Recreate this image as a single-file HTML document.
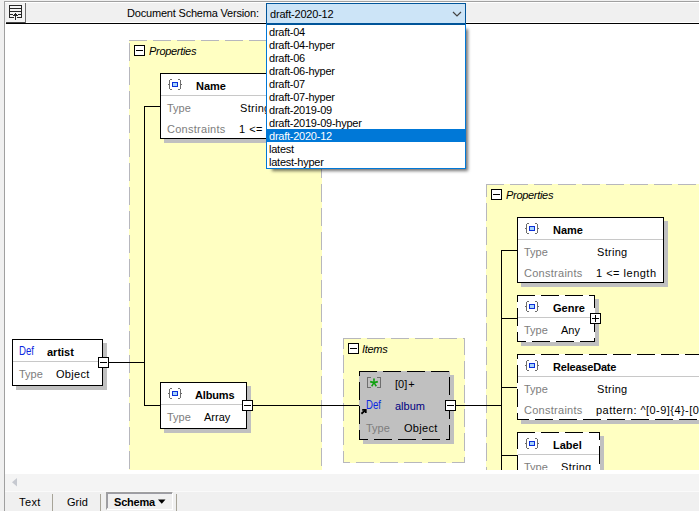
<!DOCTYPE html>
<html><head><meta charset="utf-8">
<style>
*{margin:0;padding:0;box-sizing:border-box}
html,body{width:699px;height:511px;overflow:hidden;background:#f0f0f0;font-family:"Liberation Sans",sans-serif;font-size:11px;color:#000}
.a{position:absolute}
.t{position:absolute;white-space:pre;line-height:12px}
#canvas{position:absolute;left:5px;top:24px;width:694px;height:450px;background:#fff}
#clip{position:absolute;left:0;top:0;width:694px;height:446px;overflow:hidden}
.panel{position:absolute;background:#fffdc8}
.box{position:absolute;background:#fff;border:1px solid #000}
.sh{position:absolute;background:#c0c0c0}
.sep{position:absolute;height:1px;background:#c8c8c8}
.ln{position:absolute;background:#000}
.btn{position:absolute;width:11px;height:11px;border:1px solid #000;background:#fff}
.btn:before{content:"";position:absolute;left:1px;top:4px;width:7px;height:1px;background:#000}
.plus:after{content:"";position:absolute;left:4px;top:1px;width:1px;height:7px;background:#000}
.gray{color:#7d7d7d}
.def{color:#0a28e0;font-size:12px;transform:scaleX(0.8);transform-origin:0 0}
.navy{color:#000080}
.val{}
.b{font-weight:bold}
.i{font-style:italic}
</style></head><body>

<!-- window frame -->
<div class="a" style="left:4px;top:1px;width:695px;height:1px;background:#a0a0a0"></div>
<div class="a" style="left:4px;top:1px;width:1px;height:510px;background:#a0a0a0"></div>
<div class="a" style="left:5px;top:2px;width:694px;height:1px;background:#fff"></div>
<div class="a" style="left:5px;top:22px;width:694px;height:1px;background:#fff"></div>
<div class="a" style="left:6px;top:23px;width:693px;height:1px;background:#000"></div>
<div class="a" style="left:6px;top:22px;width:20px;height:1px;background:#444"></div>

<!-- toolbar icon -->
<div class="a" style="left:7px;top:4px;width:18px;height:18px;background:#f4f4f4"></div>
<div class="a" style="left:25px;top:3px;width:1px;height:20px;background:#6a6a6a"></div>
<svg class="a" style="left:0;top:0" width="30" height="24" shape-rendering="crispEdges">
<g fill="#262626">
<rect x="9" y="5" width="13" height="1"/>
<rect x="9" y="8" width="13" height="1"/>
<rect x="9" y="11" width="13" height="1"/>
<rect x="9" y="14" width="4" height="1"/>
<rect x="18" y="14" width="4" height="1"/>
<rect x="9" y="17" width="5" height="1"/>
<rect x="17" y="17" width="5" height="1"/>
<rect x="9" y="5" width="1" height="13"/>
<rect x="21" y="5" width="1" height="13"/>
<rect x="15" y="13" width="1" height="7"/>
<rect x="14" y="14" width="3" height="1"/>
<rect x="13" y="15" width="5" height="1"/>
</g>
</svg>

<div class="t" style="left:127px;top:7px;font-size:11px;letter-spacing:-0.19px">Document Schema Version:</div>

<!-- canvas -->
<div id="canvas"><div id="clip"><div style="position:absolute;left:-5px;top:-24px;width:699px;height:511px"><svg width="699" height="511" style="position:absolute;left:0;top:0" shape-rendering="crispEdges"><rect x="129" y="40" width="193" height="455" fill="#ffffc2"/><rect x="129" y="40" width="18" height="1" fill="#b7b7bd"/><rect x="153" y="40" width="18" height="1" fill="#b7b7bd"/><rect x="177" y="40" width="18" height="1" fill="#b7b7bd"/><rect x="201" y="40" width="18" height="1" fill="#b7b7bd"/><rect x="225" y="40" width="18" height="1" fill="#b7b7bd"/><rect x="249" y="40" width="18" height="1" fill="#b7b7bd"/><rect x="273" y="40" width="18" height="1" fill="#b7b7bd"/><rect x="297" y="40" width="18" height="1" fill="#b7b7bd"/><rect x="321" y="40" width="1" height="1" fill="#b7b7bd"/><rect x="134" y="494" width="18" height="1" fill="#b7b7bd"/><rect x="158" y="494" width="18" height="1" fill="#b7b7bd"/><rect x="182" y="494" width="18" height="1" fill="#b7b7bd"/><rect x="206" y="494" width="18" height="1" fill="#b7b7bd"/><rect x="230" y="494" width="18" height="1" fill="#b7b7bd"/><rect x="254" y="494" width="18" height="1" fill="#b7b7bd"/><rect x="278" y="494" width="18" height="1" fill="#b7b7bd"/><rect x="302" y="494" width="18" height="1" fill="#b7b7bd"/><rect x="129" y="43" width="1" height="18" fill="#b7b7bd"/><rect x="129" y="67" width="1" height="18" fill="#b7b7bd"/><rect x="129" y="91" width="1" height="18" fill="#b7b7bd"/><rect x="129" y="115" width="1" height="18" fill="#b7b7bd"/><rect x="129" y="139" width="1" height="18" fill="#b7b7bd"/><rect x="129" y="163" width="1" height="18" fill="#b7b7bd"/><rect x="129" y="187" width="1" height="18" fill="#b7b7bd"/><rect x="129" y="211" width="1" height="18" fill="#b7b7bd"/><rect x="129" y="235" width="1" height="18" fill="#b7b7bd"/><rect x="129" y="259" width="1" height="18" fill="#b7b7bd"/><rect x="129" y="283" width="1" height="18" fill="#b7b7bd"/><rect x="129" y="307" width="1" height="18" fill="#b7b7bd"/><rect x="129" y="331" width="1" height="18" fill="#b7b7bd"/><rect x="129" y="355" width="1" height="18" fill="#b7b7bd"/><rect x="129" y="379" width="1" height="18" fill="#b7b7bd"/><rect x="129" y="403" width="1" height="18" fill="#b7b7bd"/><rect x="129" y="427" width="1" height="18" fill="#b7b7bd"/><rect x="129" y="451" width="1" height="18" fill="#b7b7bd"/><rect x="129" y="475" width="1" height="18" fill="#b7b7bd"/><rect x="321" y="41" width="1" height="17" fill="#b7b7bd"/><rect x="321" y="64" width="1" height="18" fill="#b7b7bd"/><rect x="321" y="88" width="1" height="18" fill="#b7b7bd"/><rect x="321" y="112" width="1" height="18" fill="#b7b7bd"/><rect x="321" y="136" width="1" height="18" fill="#b7b7bd"/><rect x="321" y="160" width="1" height="18" fill="#b7b7bd"/><rect x="321" y="184" width="1" height="18" fill="#b7b7bd"/><rect x="321" y="208" width="1" height="18" fill="#b7b7bd"/><rect x="321" y="232" width="1" height="18" fill="#b7b7bd"/><rect x="321" y="256" width="1" height="18" fill="#b7b7bd"/><rect x="321" y="280" width="1" height="18" fill="#b7b7bd"/><rect x="321" y="304" width="1" height="18" fill="#b7b7bd"/><rect x="321" y="328" width="1" height="18" fill="#b7b7bd"/><rect x="321" y="352" width="1" height="18" fill="#b7b7bd"/><rect x="321" y="376" width="1" height="18" fill="#b7b7bd"/><rect x="321" y="400" width="1" height="18" fill="#b7b7bd"/><rect x="321" y="424" width="1" height="18" fill="#b7b7bd"/><rect x="321" y="448" width="1" height="18" fill="#b7b7bd"/><rect x="321" y="472" width="1" height="18" fill="#b7b7bd"/><rect x="134" y="45" width="11" height="11" fill="#000"/><rect x="135" y="46" width="9" height="9" fill="#fff"/><rect x="136" y="50" width="7" height="1" fill="#000"/><rect x="144" y="106" width="1" height="300" fill="#000"/><rect x="144" y="106" width="16" height="1" fill="#000"/><rect x="144" y="405" width="16" height="1" fill="#000"/><rect x="109" y="362" width="36" height="1" fill="#000"/><rect x="16" y="343" width="91" height="47" fill="#c0c0c0"/><rect x="12" y="339" width="91" height="47" fill="#000"/><rect x="13" y="340" width="89" height="45" fill="#fff"/><rect x="13" y="361" width="89" height="1" fill="#c8c8c8"/><rect x="98" y="357" width="11" height="11" fill="#000"/><rect x="99" y="358" width="9" height="9" fill="#fff"/><rect x="100" y="362" width="7" height="1" fill="#000"/><rect x="164" y="77" width="147" height="66" fill="#c0c0c0"/><rect x="160" y="73" width="147" height="66" fill="#000"/><rect x="161" y="74" width="145" height="64" fill="#fff"/><rect x="169" y="80" width="1" height="9" fill="#6c6c6c"/><rect x="170" y="79" width="2" height="1" fill="#6c6c6c"/><rect x="170" y="89" width="2" height="1" fill="#6c6c6c"/><rect x="168" y="84" width="1" height="1" fill="#6c6c6c"/><rect x="180" y="80" width="1" height="9" fill="#6c6c6c"/><rect x="178" y="79" width="2" height="1" fill="#6c6c6c"/><rect x="178" y="89" width="2" height="1" fill="#6c6c6c"/><rect x="181" y="84" width="1" height="1" fill="#6c6c6c"/><rect x="172" y="82" width="6" height="5" fill="#0b2fd8"/><rect x="173" y="83" width="4" height="3" fill="#a8d4fb"/><rect x="161" y="95" width="145" height="1" fill="#c8c8c8"/><rect x="164" y="386" width="87" height="47" fill="#c0c0c0"/><rect x="160" y="382" width="87" height="47" fill="#000"/><rect x="161" y="383" width="85" height="45" fill="#fff"/><rect x="169" y="389" width="1" height="9" fill="#6c6c6c"/><rect x="170" y="388" width="2" height="1" fill="#6c6c6c"/><rect x="170" y="398" width="2" height="1" fill="#6c6c6c"/><rect x="168" y="393" width="1" height="1" fill="#6c6c6c"/><rect x="180" y="389" width="1" height="9" fill="#6c6c6c"/><rect x="178" y="388" width="2" height="1" fill="#6c6c6c"/><rect x="178" y="398" width="2" height="1" fill="#6c6c6c"/><rect x="181" y="393" width="1" height="1" fill="#6c6c6c"/><rect x="172" y="391" width="6" height="5" fill="#0b2fd8"/><rect x="173" y="392" width="4" height="3" fill="#a8d4fb"/><rect x="161" y="404" width="85" height="1" fill="#c8c8c8"/><rect x="242" y="400" width="11" height="11" fill="#000"/><rect x="243" y="401" width="9" height="9" fill="#fff"/><rect x="244" y="405" width="7" height="1" fill="#000"/><rect x="343" y="338" width="122" height="125" fill="#ffffc2"/><rect x="343" y="338" width="18" height="1" fill="#b7b7bd"/><rect x="367" y="338" width="18" height="1" fill="#b7b7bd"/><rect x="391" y="338" width="18" height="1" fill="#b7b7bd"/><rect x="415" y="338" width="18" height="1" fill="#b7b7bd"/><rect x="439" y="338" width="18" height="1" fill="#b7b7bd"/><rect x="463" y="338" width="2" height="1" fill="#b7b7bd"/><rect x="343" y="462" width="7" height="1" fill="#b7b7bd"/><rect x="356" y="462" width="18" height="1" fill="#b7b7bd"/><rect x="380" y="462" width="18" height="1" fill="#b7b7bd"/><rect x="404" y="462" width="18" height="1" fill="#b7b7bd"/><rect x="428" y="462" width="18" height="1" fill="#b7b7bd"/><rect x="452" y="462" width="13" height="1" fill="#b7b7bd"/><rect x="343" y="339" width="1" height="10" fill="#b7b7bd"/><rect x="343" y="355" width="1" height="18" fill="#b7b7bd"/><rect x="343" y="379" width="1" height="18" fill="#b7b7bd"/><rect x="343" y="403" width="1" height="18" fill="#b7b7bd"/><rect x="343" y="427" width="1" height="18" fill="#b7b7bd"/><rect x="343" y="451" width="1" height="11" fill="#b7b7bd"/><rect x="464" y="339" width="1" height="16" fill="#b7b7bd"/><rect x="464" y="361" width="1" height="18" fill="#b7b7bd"/><rect x="464" y="385" width="1" height="18" fill="#b7b7bd"/><rect x="464" y="409" width="1" height="18" fill="#b7b7bd"/><rect x="464" y="433" width="1" height="18" fill="#b7b7bd"/><rect x="464" y="457" width="1" height="5" fill="#b7b7bd"/><rect x="348" y="343" width="11" height="11" fill="#000"/><rect x="349" y="344" width="9" height="9" fill="#fff"/><rect x="350" y="348" width="7" height="1" fill="#000"/><rect x="363" y="375" width="91" height="69" fill="#c0c0c0"/><rect x="359" y="371" width="91" height="69" fill="#c0c0c0"/><rect x="359" y="371" width="18" height="1" fill="#000"/><rect x="383" y="371" width="18" height="1" fill="#000"/><rect x="407" y="371" width="18" height="1" fill="#000"/><rect x="431" y="371" width="18" height="1" fill="#000"/><rect x="359" y="439" width="9" height="1" fill="#000"/><rect x="374" y="439" width="18" height="1" fill="#000"/><rect x="398" y="439" width="18" height="1" fill="#000"/><rect x="422" y="439" width="18" height="1" fill="#000"/><rect x="446" y="439" width="4" height="1" fill="#000"/><rect x="359" y="372" width="1" height="4" fill="#000"/><rect x="359" y="382" width="1" height="18" fill="#000"/><rect x="359" y="406" width="1" height="18" fill="#000"/><rect x="359" y="430" width="1" height="9" fill="#000"/><rect x="449" y="377" width="1" height="18" fill="#000"/><rect x="449" y="401" width="1" height="18" fill="#000"/><rect x="449" y="425" width="1" height="14" fill="#000"/><rect x="445" y="400" width="11" height="11" fill="#000"/><rect x="446" y="401" width="9" height="9" fill="#fff"/><rect x="447" y="405" width="7" height="1" fill="#000"/><rect x="486" y="184" width="315" height="317" fill="#ffffc2"/><rect x="486" y="184" width="18" height="1" fill="#b7b7bd"/><rect x="510" y="184" width="18" height="1" fill="#b7b7bd"/><rect x="534" y="184" width="18" height="1" fill="#b7b7bd"/><rect x="558" y="184" width="18" height="1" fill="#b7b7bd"/><rect x="582" y="184" width="18" height="1" fill="#b7b7bd"/><rect x="606" y="184" width="18" height="1" fill="#b7b7bd"/><rect x="630" y="184" width="18" height="1" fill="#b7b7bd"/><rect x="654" y="184" width="18" height="1" fill="#b7b7bd"/><rect x="678" y="184" width="18" height="1" fill="#b7b7bd"/><rect x="702" y="184" width="18" height="1" fill="#b7b7bd"/><rect x="726" y="184" width="18" height="1" fill="#b7b7bd"/><rect x="750" y="184" width="18" height="1" fill="#b7b7bd"/><rect x="774" y="184" width="18" height="1" fill="#b7b7bd"/><rect x="798" y="184" width="3" height="1" fill="#b7b7bd"/><rect x="486" y="500" width="9" height="1" fill="#b7b7bd"/><rect x="501" y="500" width="18" height="1" fill="#b7b7bd"/><rect x="525" y="500" width="18" height="1" fill="#b7b7bd"/><rect x="549" y="500" width="18" height="1" fill="#b7b7bd"/><rect x="573" y="500" width="18" height="1" fill="#b7b7bd"/><rect x="597" y="500" width="18" height="1" fill="#b7b7bd"/><rect x="621" y="500" width="18" height="1" fill="#b7b7bd"/><rect x="645" y="500" width="18" height="1" fill="#b7b7bd"/><rect x="669" y="500" width="18" height="1" fill="#b7b7bd"/><rect x="693" y="500" width="18" height="1" fill="#b7b7bd"/><rect x="717" y="500" width="18" height="1" fill="#b7b7bd"/><rect x="741" y="500" width="18" height="1" fill="#b7b7bd"/><rect x="765" y="500" width="18" height="1" fill="#b7b7bd"/><rect x="789" y="500" width="12" height="1" fill="#b7b7bd"/><rect x="486" y="185" width="1" height="12" fill="#b7b7bd"/><rect x="486" y="203" width="1" height="18" fill="#b7b7bd"/><rect x="486" y="227" width="1" height="18" fill="#b7b7bd"/><rect x="486" y="251" width="1" height="18" fill="#b7b7bd"/><rect x="486" y="275" width="1" height="18" fill="#b7b7bd"/><rect x="486" y="299" width="1" height="18" fill="#b7b7bd"/><rect x="486" y="323" width="1" height="18" fill="#b7b7bd"/><rect x="486" y="347" width="1" height="18" fill="#b7b7bd"/><rect x="486" y="371" width="1" height="18" fill="#b7b7bd"/><rect x="486" y="395" width="1" height="18" fill="#b7b7bd"/><rect x="486" y="419" width="1" height="18" fill="#b7b7bd"/><rect x="486" y="443" width="1" height="18" fill="#b7b7bd"/><rect x="486" y="467" width="1" height="18" fill="#b7b7bd"/><rect x="486" y="491" width="1" height="9" fill="#b7b7bd"/><rect x="800" y="185" width="1" height="15" fill="#b7b7bd"/><rect x="800" y="206" width="1" height="18" fill="#b7b7bd"/><rect x="800" y="230" width="1" height="18" fill="#b7b7bd"/><rect x="800" y="254" width="1" height="18" fill="#b7b7bd"/><rect x="800" y="278" width="1" height="18" fill="#b7b7bd"/><rect x="800" y="302" width="1" height="18" fill="#b7b7bd"/><rect x="800" y="326" width="1" height="18" fill="#b7b7bd"/><rect x="800" y="350" width="1" height="18" fill="#b7b7bd"/><rect x="800" y="374" width="1" height="18" fill="#b7b7bd"/><rect x="800" y="398" width="1" height="18" fill="#b7b7bd"/><rect x="800" y="422" width="1" height="18" fill="#b7b7bd"/><rect x="800" y="446" width="1" height="18" fill="#b7b7bd"/><rect x="800" y="470" width="1" height="18" fill="#b7b7bd"/><rect x="800" y="494" width="1" height="6" fill="#b7b7bd"/><rect x="491" y="189" width="11" height="11" fill="#000"/><rect x="492" y="190" width="9" height="9" fill="#fff"/><rect x="493" y="194" width="7" height="1" fill="#000"/><rect x="501" y="250" width="1" height="231" fill="#000"/><rect x="253" y="405" width="106" height="1" fill="#000"/><rect x="456" y="405" width="46" height="1" fill="#000"/><rect x="501" y="250" width="16" height="1" fill="#000"/><rect x="501" y="318" width="16" height="1" fill="#000"/><rect x="501" y="387" width="16" height="1" fill="#000"/><rect x="501" y="455" width="16" height="1" fill="#000"/><rect x="521" y="221" width="147" height="66" fill="#c0c0c0"/><rect x="517" y="217" width="147" height="66" fill="#000"/><rect x="518" y="218" width="145" height="64" fill="#fff"/><rect x="526" y="224" width="1" height="9" fill="#6c6c6c"/><rect x="527" y="223" width="2" height="1" fill="#6c6c6c"/><rect x="527" y="233" width="2" height="1" fill="#6c6c6c"/><rect x="525" y="228" width="1" height="1" fill="#6c6c6c"/><rect x="537" y="224" width="1" height="9" fill="#6c6c6c"/><rect x="535" y="223" width="2" height="1" fill="#6c6c6c"/><rect x="535" y="233" width="2" height="1" fill="#6c6c6c"/><rect x="538" y="228" width="1" height="1" fill="#6c6c6c"/><rect x="529" y="226" width="6" height="5" fill="#0b2fd8"/><rect x="530" y="227" width="4" height="3" fill="#a8d4fb"/><rect x="518" y="239" width="145" height="1" fill="#c8c8c8"/><rect x="521" y="299" width="78" height="47" fill="#c0c0c0"/><rect x="517" y="295" width="78" height="47" fill="#fff"/><rect x="517" y="295" width="18" height="1" fill="#000"/><rect x="541" y="295" width="18" height="1" fill="#000"/><rect x="565" y="295" width="18" height="1" fill="#000"/><rect x="589" y="295" width="6" height="1" fill="#000"/><rect x="517" y="341" width="9" height="1" fill="#000"/><rect x="532" y="341" width="18" height="1" fill="#000"/><rect x="556" y="341" width="18" height="1" fill="#000"/><rect x="580" y="341" width="15" height="1" fill="#000"/><rect x="517" y="296" width="1" height="6" fill="#000"/><rect x="517" y="308" width="1" height="18" fill="#000"/><rect x="517" y="332" width="1" height="9" fill="#000"/><rect x="594" y="296" width="1" height="12" fill="#000"/><rect x="594" y="314" width="1" height="18" fill="#000"/><rect x="594" y="338" width="1" height="3" fill="#000"/><rect x="526" y="302" width="1" height="9" fill="#6c6c6c"/><rect x="527" y="301" width="2" height="1" fill="#6c6c6c"/><rect x="527" y="311" width="2" height="1" fill="#6c6c6c"/><rect x="525" y="306" width="1" height="1" fill="#6c6c6c"/><rect x="537" y="302" width="1" height="9" fill="#6c6c6c"/><rect x="535" y="301" width="2" height="1" fill="#6c6c6c"/><rect x="535" y="311" width="2" height="1" fill="#6c6c6c"/><rect x="538" y="306" width="1" height="1" fill="#6c6c6c"/><rect x="529" y="304" width="6" height="5" fill="#0b2fd8"/><rect x="530" y="305" width="4" height="3" fill="#a8d4fb"/><rect x="518" y="317" width="76" height="1" fill="#c8c8c8"/><rect x="590" y="313" width="11" height="11" fill="#000"/><rect x="591" y="314" width="9" height="9" fill="#fff"/><rect x="592" y="318" width="7" height="1" fill="#000"/><rect x="595" y="315" width="1" height="7" fill="#000"/><rect x="521" y="358" width="190" height="66" fill="#c0c0c0"/><rect x="517" y="354" width="190" height="66" fill="#fff"/><rect x="517" y="354" width="18" height="1" fill="#000"/><rect x="541" y="354" width="18" height="1" fill="#000"/><rect x="565" y="354" width="18" height="1" fill="#000"/><rect x="589" y="354" width="18" height="1" fill="#000"/><rect x="613" y="354" width="18" height="1" fill="#000"/><rect x="637" y="354" width="18" height="1" fill="#000"/><rect x="661" y="354" width="18" height="1" fill="#000"/><rect x="685" y="354" width="18" height="1" fill="#000"/><rect x="517" y="419" width="12" height="1" fill="#000"/><rect x="535" y="419" width="18" height="1" fill="#000"/><rect x="559" y="419" width="18" height="1" fill="#000"/><rect x="583" y="419" width="18" height="1" fill="#000"/><rect x="607" y="419" width="18" height="1" fill="#000"/><rect x="631" y="419" width="18" height="1" fill="#000"/><rect x="655" y="419" width="18" height="1" fill="#000"/><rect x="679" y="419" width="18" height="1" fill="#000"/><rect x="703" y="419" width="4" height="1" fill="#000"/><rect x="517" y="355" width="1" height="4" fill="#000"/><rect x="517" y="365" width="1" height="18" fill="#000"/><rect x="517" y="389" width="1" height="18" fill="#000"/><rect x="517" y="413" width="1" height="6" fill="#000"/><rect x="706" y="357" width="1" height="18" fill="#000"/><rect x="706" y="381" width="1" height="18" fill="#000"/><rect x="706" y="405" width="1" height="14" fill="#000"/><rect x="526" y="361" width="1" height="9" fill="#6c6c6c"/><rect x="527" y="360" width="2" height="1" fill="#6c6c6c"/><rect x="527" y="370" width="2" height="1" fill="#6c6c6c"/><rect x="525" y="365" width="1" height="1" fill="#6c6c6c"/><rect x="537" y="361" width="1" height="9" fill="#6c6c6c"/><rect x="535" y="360" width="2" height="1" fill="#6c6c6c"/><rect x="535" y="370" width="2" height="1" fill="#6c6c6c"/><rect x="538" y="365" width="1" height="1" fill="#6c6c6c"/><rect x="529" y="363" width="6" height="5" fill="#0b2fd8"/><rect x="530" y="364" width="4" height="3" fill="#a8d4fb"/><rect x="518" y="376" width="188" height="1" fill="#c8c8c8"/><rect x="521" y="436" width="83" height="47" fill="#c0c0c0"/><rect x="517" y="432" width="83" height="47" fill="#fff"/><rect x="517" y="432" width="18" height="1" fill="#000"/><rect x="541" y="432" width="18" height="1" fill="#000"/><rect x="565" y="432" width="18" height="1" fill="#000"/><rect x="589" y="432" width="11" height="1" fill="#000"/><rect x="518" y="478" width="18" height="1" fill="#000"/><rect x="542" y="478" width="18" height="1" fill="#000"/><rect x="566" y="478" width="18" height="1" fill="#000"/><rect x="590" y="478" width="10" height="1" fill="#000"/><rect x="517" y="433" width="1" height="16" fill="#000"/><rect x="517" y="455" width="1" height="18" fill="#000"/><rect x="599" y="433" width="1" height="7" fill="#000"/><rect x="599" y="446" width="1" height="18" fill="#000"/><rect x="599" y="470" width="1" height="8" fill="#000"/><rect x="526" y="439" width="1" height="9" fill="#6c6c6c"/><rect x="527" y="438" width="2" height="1" fill="#6c6c6c"/><rect x="527" y="448" width="2" height="1" fill="#6c6c6c"/><rect x="525" y="443" width="1" height="1" fill="#6c6c6c"/><rect x="537" y="439" width="1" height="9" fill="#6c6c6c"/><rect x="535" y="438" width="2" height="1" fill="#6c6c6c"/><rect x="535" y="448" width="2" height="1" fill="#6c6c6c"/><rect x="538" y="443" width="1" height="1" fill="#6c6c6c"/><rect x="529" y="441" width="6" height="5" fill="#0b2fd8"/><rect x="530" y="442" width="4" height="3" fill="#a8d4fb"/><rect x="518" y="454" width="81" height="1" fill="#c8c8c8"/></svg>
<svg width="699" height="511" style="position:absolute;left:0;top:0">
<g fill="#6e6e6e" shape-rendering="crispEdges">
<rect x="367" y="377" width="1" height="11"/><rect x="367" y="377" width="4" height="1"/><rect x="367" y="387" width="4" height="1"/>
<rect x="380" y="377" width="1" height="11"/><rect x="377" y="377" width="4" height="1"/><rect x="377" y="387" width="4" height="1"/>
</g>
<g transform="translate(374,382.6)" fill="#10a010">
<path d="M-0.9,-4 L0.9,-4 L0.7,-1 L3.6,-1.9 L4.1,-0.2 L1.2,0.6 L3,3.2 L1.6,4.2 L0,1.5 L-1.6,4.2 L-3,3.2 L-1.2,0.6 L-4.1,-0.2 L-3.6,-1.9 L-0.7,-1 Z"/>
</g>
<g stroke="#000" fill="none">
<polyline points="362.2,409.8 365.8,409.8 365.8,413" stroke-width="1.7"/>
<line x1="365.2" y1="410.4" x2="361.4" y2="413.8" stroke-width="1.9"/>
</g>
</svg>
<div class="t i" style="left:149px;top:45px;letter-spacing:-0.3px">Properties</div><div class="t def" style="left:19px;top:345px;">Def</div><div class="t b" style="left:47px;top:346px;">artist</div><div class="t gray" style="left:19px;top:368px;">Type</div><div class="t val" style="left:56px;top:368px;letter-spacing:0.3px">Object</div><div class="t b" style="left:196px;top:80px;">Name</div><div class="t gray" style="left:167px;top:102px;">Type</div><div class="t val" style="left:240px;top:102px;letter-spacing:0.3px">String</div><div class="t gray" style="left:167px;top:123px;letter-spacing:0.27px">Constraints</div><div class="t val" style="left:239px;top:123px;letter-spacing:0.5px">1 &lt;= length</div><div class="t b" style="left:195px;top:389px;letter-spacing:-0.15px">Albums</div><div class="t gray" style="left:167px;top:411px;">Type</div><div class="t val" style="left:204px;top:411px;">Array</div><div class="t i" style="left:362px;top:343px;letter-spacing:-0.3px">Items</div><div class="t i" style="left:506px;top:189px;letter-spacing:-0.3px">Properties</div><div class="t b" style="left:553px;top:224px;">Name</div><div class="t gray" style="left:524px;top:246px;">Type</div><div class="t val" style="left:597px;top:246px;letter-spacing:0.3px">String</div><div class="t gray" style="left:524px;top:267px;letter-spacing:0.27px">Constraints</div><div class="t val" style="left:596px;top:267px;letter-spacing:0.5px">1 &lt;= length</div><div class="t b" style="left:553px;top:302px;">Genre</div><div class="t gray" style="left:524px;top:324px;">Type</div><div class="t val" style="left:561px;top:324px;">Any</div><div class="t b" style="left:553px;top:361px;letter-spacing:-0.2px">ReleaseDate</div><div class="t gray" style="left:524px;top:383px;">Type</div><div class="t val" style="left:597px;top:383px;letter-spacing:0.3px">String</div><div class="t gray" style="left:524px;top:404px;letter-spacing:0.27px">Constraints</div><div class="t val" style="left:596px;top:404px;letter-spacing:0.45px">pattern: ^[0-9]{4}-[0-9]{2}-[0-9]{2}$</div><div class="t b" style="left:553px;top:439px;">Label</div><div class="t gray" style="left:524px;top:461px;">Type</div><div class="t val" style="left:561px;top:461px;letter-spacing:0.3px">String</div><div class="t" style="left:395px;top:378px;font-size:11px">[0]<span style="margin-left:1px">+</span></div><div class="t def" style="left:366px;top:399px;">Def</div><div class="t navy" style="left:395px;top:400px;">album</div><div class="t gray" style="left:366px;top:422px;">Type</div><div class="t val" style="left:404px;top:422px;letter-spacing:0.3px">Object</div></div></div></div>

<!-- scrollbar -->
<div class="a" style="left:5px;top:474px;width:694px;height:17px;background:#f4f4f4"></div>
<svg class="a" style="left:10px;top:476px" width="10" height="12"><polygon points="7,2 7,10.5 2,6.3" fill="#c6c9d0"/></svg>
<div class="a" style="left:5px;top:491px;width:694px;height:1px;background:#fafafa"></div>

<!-- tabs -->
<div class="t" style="left:19px;top:496px;letter-spacing:0.4px">Text</div>
<div class="a" style="left:52px;top:494px;width:1px;height:17px;background:#a7a498"></div>
<div class="t" style="left:67px;top:496px">Grid</div>
<div class="a" style="left:100px;top:494px;width:1px;height:17px;background:#a7a498"></div>
<div class="a" style="left:106px;top:492px;width:67px;height:18px;border-top:1px solid #a0a0a0;border-left:1px solid #a0a0a0;border-bottom:1px solid #fff;border-right:1px solid #fff"></div>
<div class="a" style="left:107px;top:493px;width:65px;height:1px;background:#9c9ca4"></div>
<div class="a" style="left:107px;top:493px;width:1px;height:15px;background:#9c9ca4"></div>
<div class="t b" style="left:114px;top:496px;letter-spacing:-0.2px">Schema</div>
<svg class="a" style="left:157px;top:499px" width="10" height="6"><polygon points="1,0.5 8.5,0.5 4.75,4.8" fill="#000"/></svg>
<div class="a" style="left:176px;top:494px;width:1px;height:17px;background:#a7a498"></div>

<!-- combobox -->
<div class="a" style="left:266px;top:3px;width:200px;height:21px;background:#cce4f7;border:1px solid #005499"></div>
<div class="t" style="left:270px;top:8px;letter-spacing:-0.2px">draft-2020-12</div>
<svg class="a" style="left:450px;top:8px" width="14" height="12"><polyline points="3,4 7,8 11,4" fill="none" stroke="#444" stroke-width="1.2"/></svg>

<!-- dropdown -->
<div class="a" style="left:266px;top:23px;width:200px;height:146px;background:#fff;border:1px solid #0078d7;border-top:2px solid #005499;box-shadow:4px 4px 3px -2px rgba(0,0,0,0.55)"></div>
<div class="a" style="left:267px;top:129px;width:198px;height:13px;background:#0078d7"></div>
<div class="a" style="left:269px;top:26px;line-height:13px;white-space:pre;letter-spacing:-0.24px">draft-04
draft-04-hyper
draft-06
draft-06-hyper
draft-07
draft-07-hyper
draft-2019-09
draft-2019-09-hyper
<span style="color:#fff">draft-2020-12</span>
latest
latest-hyper</div>

</body></html>
